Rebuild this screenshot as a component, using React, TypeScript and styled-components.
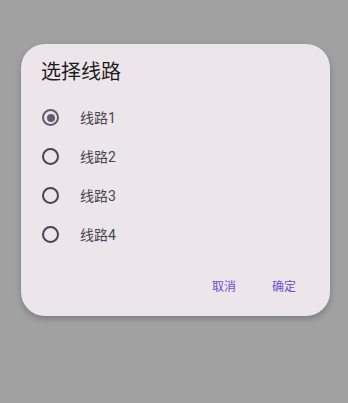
import { useState } from "react";
import styled, { createGlobalStyle } from "styled-components";

const GlobalStyle = createGlobalStyle`
  html, body {
    margin: 0;
    padding: 0;
    background: #a1a1a1;
    font-family: Roboto, "Noto Sans CJK SC", "Noto Sans", sans-serif;
  }
  #root {
    height: 403px;
  }
`;

const routes = ["线路1", "线路2", "线路3", "线路4"];

function App() {
  const [selected, setSelected] = useState<number>(0);

  return (
    <>
      <GlobalStyle />
      <Backdrop>
        <Dialog>
          <Title>选择线路</Title>
          <List>
            {routes.map((name, i) => (
              <Row key={name} onClick={() => setSelected(i)}>
                <Radio $checked={selected === i} />
                <Label>{name}</Label>
              </Row>
            ))}
          </List>
          <Actions>
            <TextButton>取消</TextButton>
            <TextButton>确定</TextButton>
          </Actions>
        </Dialog>
      </Backdrop>
    </>
  );
}

const Backdrop = styled.div`
  width: 348px;
  height: 403px;
  padding: 44px 0 0 21px;
  box-sizing: border-box;
`;

const Dialog = styled.div`
  width: 309px;
  height: 272px;
  box-sizing: border-box;
  background: #ece6eb;
  border-radius: 24px;
  box-shadow: 0 3px 6px rgba(0, 0, 0, 0.22);
  padding: 14px 0 0 0;
  display: flex;
  flex-direction: column;
`;

const Title = styled.div`
  font-size: 20px;
  line-height: 28px;
  color: #1d1b20;
  padding-left: 20px;
`;

const List = styled.div`
  margin-top: 12px;
  display: flex;
  flex-direction: column;
`;

const Row = styled.div`
  height: 39px;
  display: flex;
  align-items: center;
  padding-left: 21px;
  cursor: pointer;
`;

const Radio = styled.span<{ $checked: boolean }>`
  width: 17px;
  height: 17px;
  box-sizing: border-box;
  border-radius: 50%;
  border: 2px solid ${(p) => (p.$checked ? "#625b71" : "#49454f")};
  display: inline-flex;
  align-items: center;
  justify-content: center;

  &::after {
    content: "";
    width: 8px;
    height: 8px;
    border-radius: 50%;
    background: #625b71;
    display: ${(p) => (p.$checked ? "block" : "none")};
  }
`;

const Label = styled.span`
  margin-left: 21px;
  font-size: 14px;
  line-height: 20px;
  color: #49454f;
`;

const Actions = styled.div`
  margin-top: auto;
  height: 64px;
  display: flex;
  justify-content: flex-end;
  align-items: flex-start;
  padding: 16px 22px 0 0;
  gap: 12px;
  box-sizing: border-box;
`;

const TextButton = styled.button`
  background: transparent;
  border: none;
  padding: 8px 12px;
  font-family: inherit;
  font-size: 12px;
  line-height: 18px;
  color: #6b4fcf;
  cursor: pointer;
`;

export default App;
